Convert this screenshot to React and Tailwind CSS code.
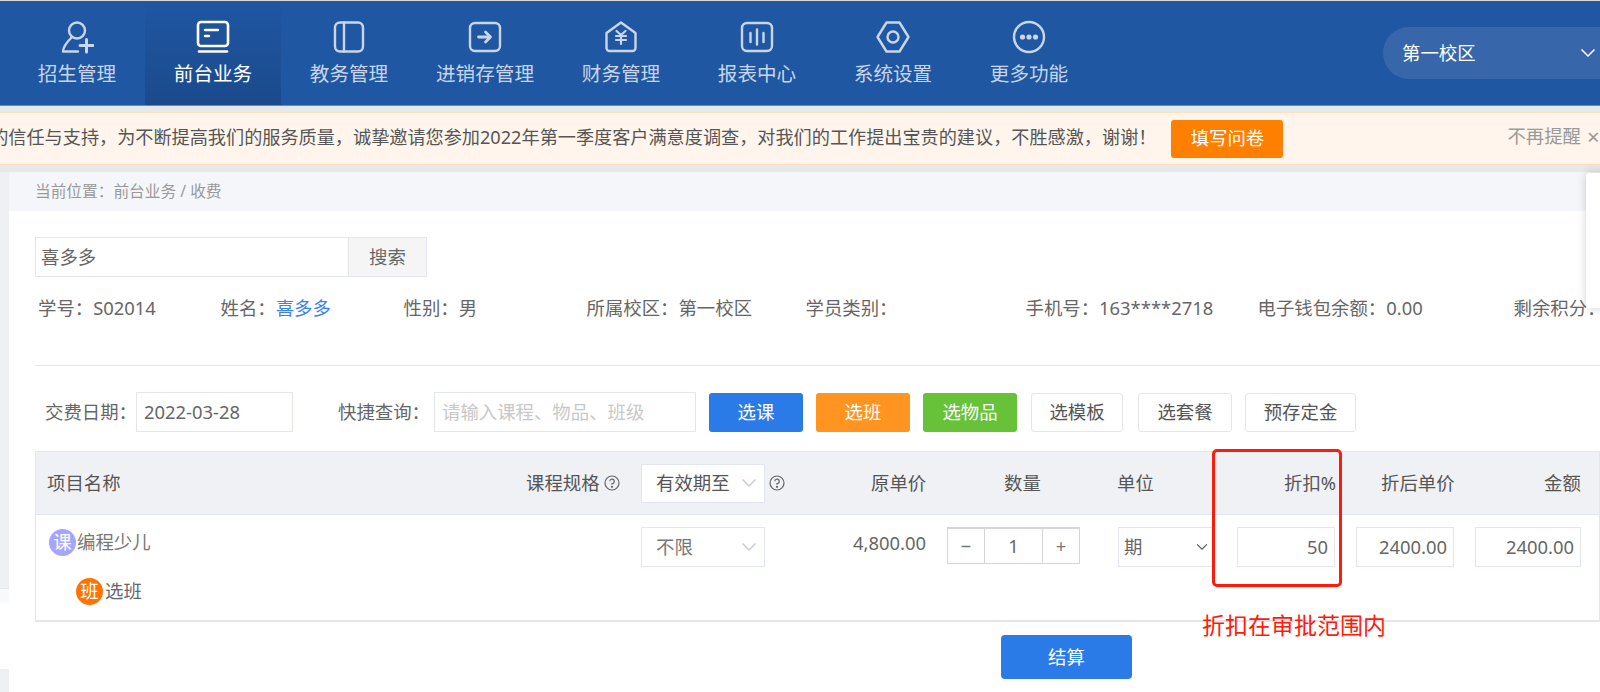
const F = '[font-family:"Noto_Sans","Noto_Sans_CJK_SC",sans-serif]';

const S = { fill: "none", stroke: "currentColor", strokeWidth: 2.4, strokeLinecap: "round", strokeLinejoin: "round" };

function Icon({ children }) {
  return (
    <svg width="34" height="34" viewBox="0 0 34 34" {...S}>
      {children}
    </svg>
  );
}

const icons = [
  <Icon key="a">
    <circle cx="17" cy="10.5" r="8" />
    <path d="M12 17 C8 21 3 27 3 31.5 H18" />
    <path d="M20 25.5 H33 M26.5 19.5 V32" strokeWidth="3" />
  </Icon>,
  <Icon key="b">
    <rect x="2" y="2" width="30" height="24" rx="3" strokeWidth="2.6" />
    <path d="M9 10 H22 M9 16 H13" />
    <path d="M3 31.5 H31" strokeWidth="2.6" />
  </Icon>,
  <Icon key="c">
    <rect x="3" y="2.5" width="28" height="29" rx="5" />
    <path d="M12 2.5 V31.5" />
  </Icon>,
  <Icon key="d">
    <rect x="2" y="3" width="30" height="28" rx="5" />
    <path d="M10.5 17 H22 M17.5 12 L22.5 17 L17.5 22" strokeWidth="2.8" />
  </Icon>,
  <Icon key="e">
    <path d="M2.5 13 L17 2.5 L31.5 13 V28 A3 3 0 0 1 28.5 31 H5.5 A3 3 0 0 1 2.5 28 Z" />
    <path d="M12.5 11 L17 15 L21.5 11 M12 16 H22 M12 20 H22 M17 15 V24" strokeWidth="2.2" />
  </Icon>,
  <Icon key="f">
    <rect x="2" y="3" width="30" height="28" rx="5" />
    <path d="M10.5 13 V22 M17 9.5 V24.5 M23.5 13 V22" />
  </Icon>,
  <Icon key="g">
    <path d="M10.5 2.5 H23.5 L32.5 17 L23.5 31.5 H10.5 L1.5 17 Z" />
    <circle cx="17" cy="17" r="5.5" />
  </Icon>,
  <Icon key="h">
    <circle cx="17" cy="17" r="15" />
    <circle cx="10.5" cy="17" r="1.4" fill="currentColor" />
    <circle cx="17" cy="17" r="1.4" fill="currentColor" />
    <circle cx="23.5" cy="17" r="1.4" fill="currentColor" />
  </Icon>,
];

const nav = ["招生管理", "前台业务", "教务管理", "进销存管理", "财务管理", "报表中心", "系统设置", "更多功能"];

function Chevron({ className }) {
  return (
    <svg className={className} width="16" height="10" viewBox="0 0 16 10" fill="none" stroke="currentColor" strokeWidth="1.5">
      <path d="M1.5 1.5 L8 8 L14.5 1.5" />
    </svg>
  );
}

function Help() {
  return (
    <svg width="16" height="16" viewBox="0 0 16 16" fill="none" stroke="#666" strokeWidth="1.2" className="shrink-0">
      <circle cx="8" cy="8" r="7" />
      <path d="M5.8 6.2 A2.2 2.2 0 1 1 8 8.6 V9.8" />
      <circle cx="8" cy="11.8" r="0.5" fill="#666" />
    </svg>
  );
}

function Btn({ w, cls, children, ml }) {
  return (
    <div className={`h-[39px] rounded-[3px] flex items-center justify-center ${w} ${ml} ${cls}`}>{children}</div>
  );
}

function Field({ w, ml, children }) {
  return (
    <div className={`h-10 border border-[#e4e6ef] bg-white flex items-center justify-end px-[6px] text-[#666] ${w} ${ml}`}>
      {children}
    </div>
  );
}

export default function App() {
  return (
    <div className={`relative w-[1600px] h-[692px] overflow-hidden bg-white text-[18.4px] leading-none text-[#666] ${F}`}>
      <header className="h-[106px] border-t border-[#d8d8d8] border-b border-b-[#5a8ad0] bg-[#1f57a3] flex">
        <nav className="flex pl-[9px]">
          {nav.map((n, i) => (
            <div
              key={n}
              className={`w-[136px] flex flex-col items-center pt-[19px] ${
                i === 1 ? "bg-gradient-to-b from-[#1f57a3] to-[#1b4a8c] text-white" : "text-[#c9d6e9]"
              }`}
            >
              {icons[i]}
              <span className="mt-[7px] text-[19.6px] leading-[26px] whitespace-nowrap">{n}</span>
            </div>
          ))}
        </nav>
        <div className="ml-auto mt-[26px] w-[217px] h-[52px] rounded-l-[26px] bg-[#3767aa] text-white flex items-center pl-[19px] pr-[4px] justify-between">
          <span>第一校区</span>
          <Chevron className="text-white" />
        </div>
      </header>

      <div className="h-[6px] bg-[#e5e9ec]" />

      <div className="h-[53px] bg-[#fff5ec] border-y border-[#ffe0bd] flex items-center justify-end whitespace-nowrap overflow-hidden">
        <span className="text-[#555] text-[18.15px] shrink-0 pb-[2px]">
          的信任与支持，为不断提高我们的服务质量，诚挚邀请您参加2022年第一季度客户满意度调查，对我们的工作提出宝贵的建议，不胜感激，谢谢！
        </span>
        <div className="ml-[15px] w-[112px] h-[38px] shrink-0 rounded-[3px] bg-[#ff8000] text-white flex items-center justify-center">
          填写问卷
        </div>
        <span className="ml-[224px] text-[#999] shrink-0 pb-[5px]">不再提醒</span>
        <span className="ml-[6px] w-[13px] text-[#999] shrink-0 pb-[5px] text-[22px]">×</span>
      </div>

      <div className="h-[7px] bg-[#e5e9ec]" />

      <div className="flex">
        <div className="w-[9px] shrink-0 flex flex-col h-[520px]">
          <div className="h-[417px] bg-[#eef0f4] border-b border-[#e4e6ea]" />
          <div className="h-[14px] bg-[#f8f9fb]" />
          <div className="h-[66px] bg-white" />
          <div className="flex-1 bg-[#eef0f4]" />
        </div>
        <main className="flex-1 min-w-0">
          <div className="h-[39px] bg-[#f5f6fa] flex items-center pl-[26px] text-[15.7px] text-[#999]">
            当前位置：前台业务 / 收费
          </div>

          <div className="pl-[26px]">
            <div className="mt-[26px] flex w-[392px] h-10 border border-[#e4e6ef]">
              <div className="flex-1 flex items-center pl-[5px]">喜多多</div>
              <div className="w-[78px] bg-[#f5f5f5] border-l border-[#e4e6ef] flex items-center justify-center">搜索</div>
            </div>

            <div className="mt-[21px] flex h-[20px] items-center whitespace-nowrap pl-[3px]">
              <span className="w-[182.5px] shrink-0">学号：S02014</span>
              <span className="w-[183px] shrink-0">姓名：<span className="text-[#3b82e8]">喜多多</span></span>
              <span className="w-[183px] shrink-0">性别：男</span>
              <span className="w-[219px] shrink-0">所属校区：第一校区</span>
              <span className="w-[220px] shrink-0">学员类别：</span>
              <span className="w-[232px] shrink-0">手机号：163****2718</span>
              <span className="w-[256px] shrink-0">电子钱包余额：0.00</span>
              <span className="shrink-0">剩余积分：</span>
            </div>

            <div className="mt-[47px] h-px bg-[#e4e6ea]" />

            <div className="mt-[26px] flex items-center h-10 whitespace-nowrap">
              <span className="ml-[10px] w-[91px]">交费日期：</span>
              <div className="w-[157px] h-10 border border-[#e4e6ef] flex items-center pl-[7px]">2022-03-28</div>
              <span className="ml-[45px] w-[96px]">快捷查询：</span>
              <div className="w-[262px] h-10 border border-[#e4e6ef] flex items-center pl-[7px] text-[#c8c8c8] overflow-hidden">
                请输入课程、物品、班级
              </div>
              <Btn ml="ml-[13px]" w="w-[94px]" cls="bg-[#2a7ae8] text-white">选课</Btn>
              <Btn ml="ml-[13px]" w="w-[94px]" cls="bg-[#ff9420] text-white">选班</Btn>
              <Btn ml="ml-[13px]" w="w-[94px]" cls="bg-[#67c23a] text-white">选物品</Btn>
              <Btn ml="ml-[14px]" w="w-[92px]" cls="bg-white border border-[#e4e6ef] text-[#555]">选模板</Btn>
              <Btn ml="ml-[15px]" w="w-[94px]" cls="bg-white border border-[#e4e6ef] text-[#555]">选套餐</Btn>
              <Btn ml="ml-[13px]" w="w-[111px]" cls="bg-white border border-[#e4e6ef] text-[#555]">预存定金</Btn>
            </div>

            <div className="mt-[19px] border border-[#e4e6ef] border-b-2 h-[171px]">
              <div className="h-[63px] bg-[#f0f1f5] border-b border-[#e4e6ef] flex items-center whitespace-nowrap text-[#555]">
                <span className="ml-[11px] w-[479px]">项目名称</span>
                <span className="w-[74px]">课程规格</span>
                <span className="ml-[4px]"><Help /></span>
                <div className="ml-[21px] w-[124px] h-[39px] bg-white border border-[#e4e6ef] flex items-center justify-between pl-[14px] pr-[7px]">
                  有效期至<Chevron className="text-[#c8ccd4]" />
                </div>
                <span className="ml-[4px]"><Help /></span>
                <span className="ml-[86px] w-[55px] text-right">原单价</span>
                <span className="ml-[78px] w-[37px]">数量</span>
                <span className="ml-[76px] w-[36px]">单位</span>
                <span className="ml-[131px] w-[52px] text-right">折扣%</span>
                <span className="ml-[45px] w-[72px]">折后单价</span>
                <span className="ml-[91px] w-[36px]">金额</span>
              </div>
              <div className="flex">
                <div className="w-[605px] shrink-0 pl-[13px] pt-[14px]">
                  <div className="flex items-center h-[27px]">
                    <span className="w-[27px] h-[27px] rounded-full bg-[#a5a5ff] text-white flex items-center justify-center">课</span>
                    <span className="ml-[1px] text-[#777]">编程少儿</span>
                  </div>
                  <div className="flex items-center h-[27px] mt-[22px] ml-[27px]">
                    <span className="w-[27px] h-[27px] rounded-full bg-[#ff7300] text-white flex items-center justify-center">班</span>
                    <span className="ml-[2px] text-[#666]">选班</span>
                  </div>
                </div>
                <div className="w-[124px] h-10 mt-[12px] border border-[#e4e6ef] flex items-center justify-between pl-[14px] pr-[7px] text-[#777]">
                  不限<Chevron className="text-[#c8ccd4]" />
                </div>
                <span className="mt-[19px] ml-[81px] w-[80px] text-right whitespace-nowrap">4,800.00</span>
                <div className="ml-[21px] mt-[12px] w-[133px] h-[37px] border border-[#d5d5d5] border-t-2 flex items-center text-center">
                  <span className="w-[36px] text-[#777]">−</span>
                  <span className="flex-1 h-full border-x border-[#d5d5d5] flex items-center justify-center">1</span>
                  <span className="w-[36px] text-[#777]">+</span>
                </div>
                <div className="ml-[38px] mt-[12px] w-[96px] h-10 border border-[#e4e6ef] flex items-center justify-between pl-[5px] pr-[5px]">
                  期<Chevron className="text-[#555] w-3 h-2" />
                </div>
                <Field w="w-[98px]" ml="ml-[23px] mt-[12px]">50</Field>
                <Field w="w-[98px]" ml="ml-[21px] mt-[12px]">2400.00</Field>
                <Field w="w-[106px]" ml="ml-[21px] mt-[12px]">2400.00</Field>
              </div>
            </div>

            <div className="mt-[13px] ml-[966px] w-[131px] h-[44px] rounded-[4px] bg-[#2a7ae8] text-white flex items-center justify-center">
              结算
            </div>
          </div>
        </main>
      </div>

      <div className="absolute left-[1586px] top-[173px] w-[30px] h-[135px] bg-white rounded-l-[3px] shadow-[0_0_10px_rgba(0,0,0,0.18)]" />
      <div className="absolute left-[1212px] top-[449px] w-[130px] h-[138px] border-[3px] border-[#ff1a0a] rounded-[5px]" />
      <span className="absolute left-[1202px] top-[612px] text-[23px] leading-[26px] text-[#ff1a0a] whitespace-nowrap">折扣在审批范围内</span>
    </div>
  );
}
